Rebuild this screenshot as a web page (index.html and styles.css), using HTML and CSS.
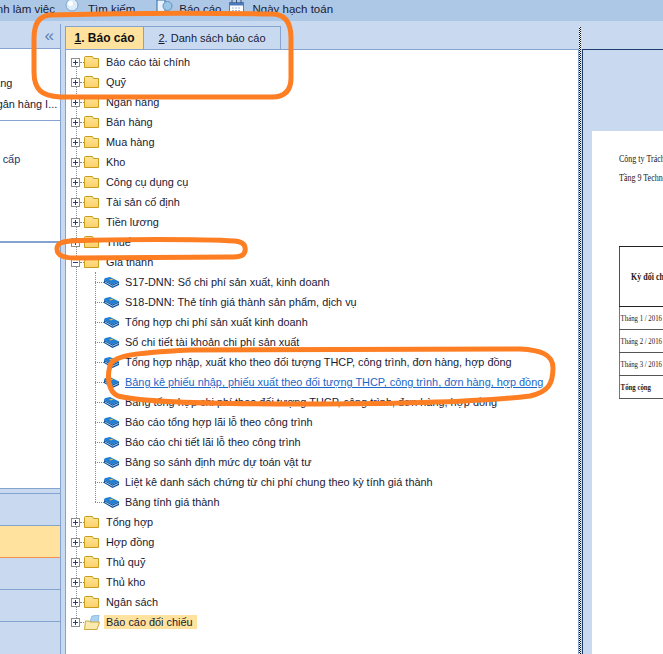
FILE: index.html
```html
<!DOCTYPE html>
<html lang="vi">
<head>
    <meta charset="UTF-8">
    <meta name="viewport" content="width=device-width, initial-scale=1.0">
    <title>Báo cáo</title>
    <link rel="stylesheet" href="styles.css">
</head>
<body>
    <!-- shared tree and toolbar icons -->
    <svg class="defs" width="0" height="0">
        <defs>
            <linearGradient id="folderFill" x1="0" y1="0" x2="0" y2="1">
                <stop offset="0" stop-color="#fee496"/>
                <stop offset="1" stop-color="#fcd06a"/>
            </linearGradient>
            <symbol id="plus" viewBox="0 0 9 9">
                <rect x="0.5" y="0.5" width="8" height="8" fill="#fff" stroke="#8e8e8e"/>
                <path d="M2 4.5h5M4.5 2v5" stroke="#2b3a7a"/>
            </symbol>
            <symbol id="minus" viewBox="0 0 9 9">
                <rect x="0.5" y="0.5" width="8" height="8" fill="#fff" stroke="#8e8e8e"/>
                <path d="M2 4.5h5" stroke="#2b3a7a"/>
            </symbol>
            <symbol id="folder" viewBox="0 0 15 12">
                <path d="M0.5 11.5V1.5Q0.5 0.5 1.5 0.5H8.500L9.500 2.500H14.500V11.500Z" fill="url(#folderFill)" stroke="#c79f1c"/>
            </symbol>
            <symbol id="folderOpen" viewBox="0 0 16 15">
                <path d="M5 9L8 1L15 0L14 9Z" fill="#a9d3f2" stroke="#7fa9cc" stroke-width="0.7"/>
                <path d="M0.500 14.500L1.500 6H5L6 7H15.500L13 14.500Z" fill="#fbe9b0" stroke="#c9a93c"/>
            </symbol>
            <symbol id="book" viewBox="0 0 15 11">
                <path d="M0 3Q0 1.500 1.500 1L6 0L15 4.500L8.500 7.500Z" fill="#1f7fd6"/>
                <path d="M0 3V6L8.500 11L15 8V4.500L8.500 7.500Z" fill="#0d5098"/>
                <path d="M1 5L8.500 9.200L14.500 6.400" stroke="#d5e9fb" fill="none" stroke-width="0.8"/>
                <path d="M5 2.500L8 1.700L9.500 2.600L6.500 3.500Z" fill="#e8b64c"/>
            </symbol>
        </defs>
    </svg>

    <header class="toolbar">
        <span class="tool tool-first">Màn hình làm việc</span>
        <svg class="tool-icon tool-icon-search" width="14" height="14" viewBox="0 0 14 14"><circle cx="7" cy="5" r="6" fill="#dcecf8" stroke="#7fa6c9"/><circle cx="5.5" cy="3.5" r="2.5" fill="#fff"/></svg>
        <span class="tool">Tìm kiếm</span>
        <svg class="tool-icon tool-icon-report" width="17" height="14" viewBox="0 0 17 14"><rect x="1" y="0" width="8" height="12" fill="#eaf3fb" stroke="#2f6ea8"/><circle cx="11.5" cy="6" r="4.5" fill="#9cc6e8" stroke="#5f93bf"/></svg>
        <span class="tool">Báo cáo</span>
        <svg class="tool-icon tool-icon-date" width="15" height="14" viewBox="0 0 15 14"><rect x="0.5" y="2.5" width="14" height="10" fill="#fff" stroke="#5a7fb5"/><rect x="0.5" y="2.5" width="14" height="3" fill="#4c78bd"/><path d="M3 0v3M7.500 0v3M12 0v3" stroke="#44526e"/><path d="M3 8h9M3 10.500h9" stroke="#9db6d8" stroke-dasharray="2 1"/></svg>
        <span class="tool">Ngày hạch toán</span>
    </header>

    <main class="workspace">
        <aside class="side">
            <div class="side-head"><span class="collapse">«</span></div>
            <div class="side-list">
                <div class="side-section side-section-one">
                    <p class="side-text side-bank">Ngân hàng</p>
                    <p class="side-text side-deposit">Tiền gửi ngân hàng I...</p>
                </div>
                <div class="side-section side-section-two">
                    <p class="side-text side-supplier">Nhà cung cấp</p>
                </div>
                <div class="side-section side-section-three"></div>
            </div>
            <div class="side-strip"></div>
            <div class="side-group"></div>
            <div class="side-group side-group-on"></div>
            <div class="side-group"></div>
            <div class="side-group"></div>
            <div class="side-group side-group-last"></div>
        </aside>

        <section class="reports">
            <div class="tabs">
                <div class="tab tab-on"><u>1</u>. Báo cáo</div>
                <div class="tab"><u>2</u>. Danh sách báo cáo</div>
            </div>
            <div class="tree-panel">
                <ul class="tree">
                    <li class="row"><svg class="exp"><use href="#plus"/></svg><i class="twig"></i><svg class="ico"><use href="#folder"/></svg><span class="label">Báo cáo tài chính</span></li>
                    <li class="row"><svg class="exp"><use href="#plus"/></svg><i class="twig"></i><svg class="ico"><use href="#folder"/></svg><span class="label">Quỹ</span></li>
                    <li class="row"><svg class="exp"><use href="#plus"/></svg><i class="twig"></i><svg class="ico"><use href="#folder"/></svg><span class="label">Ngân hàng</span></li>
                    <li class="row"><svg class="exp"><use href="#plus"/></svg><i class="twig"></i><svg class="ico"><use href="#folder"/></svg><span class="label">Bán hàng</span></li>
                    <li class="row"><svg class="exp"><use href="#plus"/></svg><i class="twig"></i><svg class="ico"><use href="#folder"/></svg><span class="label">Mua hàng</span></li>
                    <li class="row"><svg class="exp"><use href="#plus"/></svg><i class="twig"></i><svg class="ico"><use href="#folder"/></svg><span class="label">Kho</span></li>
                    <li class="row"><svg class="exp"><use href="#plus"/></svg><i class="twig"></i><svg class="ico"><use href="#folder"/></svg><span class="label">Công cụ dụng cụ</span></li>
                    <li class="row"><svg class="exp"><use href="#plus"/></svg><i class="twig"></i><svg class="ico"><use href="#folder"/></svg><span class="label">Tài sản cố định</span></li>
                    <li class="row"><svg class="exp"><use href="#plus"/></svg><i class="twig"></i><svg class="ico"><use href="#folder"/></svg><span class="label">Tiền lương</span></li>
                    <li class="row"><svg class="exp"><use href="#plus"/></svg><i class="twig"></i><svg class="ico"><use href="#folder"/></svg><span class="label">Thuế</span></li>
                    <li class="row"><svg class="exp"><use href="#minus"/></svg><i class="twig"></i><svg class="ico"><use href="#folder"/></svg><span class="label">Giá thành</span></li>
                    <li>
                        <ul class="sub">
                            <li class="row leaf"><i class="twig"></i><svg class="book"><use href="#book"/></svg><span class="label">S17-DNN: Sổ chi phí sản xuất, kinh doanh</span></li>
                            <li class="row leaf"><i class="twig"></i><svg class="book"><use href="#book"/></svg><span class="label">S18-DNN: Thẻ tính giá thành sản phẩm, dịch vụ</span></li>
                            <li class="row leaf"><i class="twig"></i><svg class="book"><use href="#book"/></svg><span class="label">Tổng hợp chi phí sản xuất kinh doanh</span></li>
                            <li class="row leaf"><i class="twig"></i><svg class="book"><use href="#book"/></svg><span class="label">Sổ chi tiết tài khoản chi phí sản xuất</span></li>
                            <li class="row leaf"><i class="twig"></i><svg class="book"><use href="#book"/></svg><span class="label">Tổng hợp nhập, xuất kho theo đối tượng THCP, công trình, đơn hàng, hợp đồng</span></li>
                            <li class="row leaf"><i class="twig"></i><svg class="book"><use href="#book"/></svg><span class="label label-link">Bảng kê phiếu nhập, phiếu xuất theo đối tượng THCP, công trình, đơn hàng, hợp đồng</span></li>
                            <li class="row leaf"><i class="twig"></i><svg class="book"><use href="#book"/></svg><span class="label">Bảng tổng hợp chi phí theo đối tượng THCP, công trình, đơn hàng, hợp đồng</span></li>
                            <li class="row leaf"><i class="twig"></i><svg class="book"><use href="#book"/></svg><span class="label">Báo cáo tổng hợp lãi lỗ theo công trình</span></li>
                            <li class="row leaf"><i class="twig"></i><svg class="book"><use href="#book"/></svg><span class="label">Báo cáo chi tiết lãi lỗ theo công trình</span></li>
                            <li class="row leaf"><i class="twig"></i><svg class="book"><use href="#book"/></svg><span class="label">Bảng so sánh định mức dự toán vật tư</span></li>
                            <li class="row leaf"><i class="twig"></i><svg class="book"><use href="#book"/></svg><span class="label">Liệt kê danh sách chứng từ chi phí chung theo kỳ tính giá thành</span></li>
                            <li class="row leaf"><i class="twig"></i><svg class="book"><use href="#book"/></svg><span class="label">Bảng tính giá thành</span></li>
                        </ul>
                    </li>
                    <li class="row"><svg class="exp"><use href="#plus"/></svg><i class="twig"></i><svg class="ico"><use href="#folder"/></svg><span class="label">Tổng hợp</span></li>
                    <li class="row"><svg class="exp"><use href="#plus"/></svg><i class="twig"></i><svg class="ico"><use href="#folder"/></svg><span class="label">Hợp đồng</span></li>
                    <li class="row"><svg class="exp"><use href="#plus"/></svg><i class="twig"></i><svg class="ico"><use href="#folder"/></svg><span class="label">Thủ quỹ</span></li>
                    <li class="row"><svg class="exp"><use href="#plus"/></svg><i class="twig"></i><svg class="ico"><use href="#folder"/></svg><span class="label">Thủ kho</span></li>
                    <li class="row"><svg class="exp"><use href="#plus"/></svg><i class="twig"></i><svg class="ico"><use href="#folder"/></svg><span class="label">Ngân sách</span></li>
                    <li class="row"><svg class="exp"><use href="#plus"/></svg><i class="twig"></i><svg class="ico ico-open"><use href="#folderOpen"/></svg><span class="label label-on">Báo cáo đối chiếu</span></li>
                </ul>
            </div>
        </section>

        <div class="splitter"></div>

        <section class="preview">
            <div class="sheet">
                <div class="sheet-body">
                    <p class="company">Công ty Trách nhiệm hữu hạn</p>
                    <p class="company">Tầng 9 Technosoft</p>
                    <table class="recon">
                        <tr class="recon-head"><th>Kỳ đối chiếu</th></tr>
                        <tr><td>Tháng 1 / 2016</td></tr>
                        <tr><td>Tháng 2 / 2016</td></tr>
                        <tr><td>Tháng 3 / 2016</td></tr>
                        <tr><td class="recon-total">Tổng cộng</td></tr>
                    </table>
                </div>
            </div>
        </section>
    </main>

    <!-- hand drawn marks on top of the screenshot -->
    <svg class="marks" width="663" height="654" viewBox="0 0 663 654">
        <path d="M50 15C120 13 220 13 272 14C286 14 291 24 291 38L291 78C291 90 285 97 272 97L60 97C42 96 34 90 34 72L34 38C34 25 38 16 50 15Z"/>
        <path d="M70 241C120 239 200 239 235 241C244 242 246 246 245 251C244 256 240 257 230 257L75 258C62 258 57 254 57 249C57 244 60 242 70 241Z"/>
        <path d="M110 366C112 356 130 353 190 350L520 349C540 350 553 354 553 368C553 384 548 392 530 396C480 402 400 404 300 404C220 404 140 402 118 396C108 392 107 376 110 366Z"/>
    </svg>
</body>
</html>
```

FILE: styles.css
```css
/* Reset */
* {
    margin: 0;
    padding: 0;
    box-sizing: border-box;
}

body {
    position: relative;
    width: 663px;
    height: 654px;
    overflow: hidden;
    background-color: #c9daf0;
    font-family: "Liberation Sans", Arial, sans-serif;
    font-size: 10.9px;
    color: #1a1a33;
}

.defs {
    position: absolute;
}

/* Top toolbar */
.toolbar {
    height: 21px;
    background-color: #adc8e6;
    display: flex;
    align-items: flex-start;
    overflow: hidden;
    white-space: nowrap;
}

.tool {
    font-size: 11.5px;
    line-height: 18px;
}

.tool-first {
    width: 55px;
    flex-shrink: 0;
    overflow: hidden;
    direction: rtl;
}

.tool-icon {
    flex-shrink: 0;
}

.tool-icon-search {
    margin: 0 9px 0 10px;
}

.tool-icon-report {
    margin: 0 6px 0 21px;
}

.tool-icon-date {
    margin: 0 8px;
}

/* Left panel, mostly cut off by the crop */
.workspace {
    display: flex;
    height: 633px;
}

.side {
    width: 61px;
    flex-shrink: 0;
    margin-top: 3px;
    border-right: 1px solid #84a3d0;
    display: flex;
    flex-direction: column;
}

.side-head {
    height: 25px;
    border-bottom: 1px solid #84a3d0;
    text-align: right;
    padding-right: 6px;
}

.collapse {
    font-size: 17px;
    line-height: 24px;
    color: #5b7fb5;
}

.side-list {
    height: 440px;
    background-color: #fff;
}

.side-section {
    border-bottom: 1px solid #84a3d0;
    overflow: hidden;
}

.side-section-one {
    height: 72px;
    padding-top: 24px;
}

.side-section-two {
    height: 121px;
    padding-top: 28px;
}

.side-text {
    line-height: 21px;
    white-space: nowrap;
}

.side-bank {
    margin-left: -41px;
}

.side-deposit {
    margin-left: -52px;
}

.side-supplier {
    margin-left: -47px;
    color: #16386e;
}

.side-strip {
    height: 6px;
    border-top: 1px solid #84a3d0;
    border-bottom: 1px solid #84a3d0;
}

.side-group {
    height: 32px;
    border-bottom: 1px solid #84a3d0;
}

.side-group-on {
    background-color: #fee29d;
    border-bottom-color: #f0904a;
}

.side-group-last {
    border-bottom: none;
}

/* Report tree */
.reports {
    width: 514px;
    flex-shrink: 0;
    margin-left: 4px;
    padding-top: 5px;
    display: flex;
    flex-direction: column;
}

.tabs {
    display: flex;
    height: 23px;
    border-left: 1px solid #84a3d0;
}

.tab {
    padding-top: 4px;
    width: 137px;
    text-align: center;
    font-size: 11px;
    line-height: 14px;
    border-top: 1px solid #84a3d0;
    border-right: 1px solid #84a3d0;
}

.tab-on {
    width: 78px;
    background-color: #fee29d;
    font-size: 12px;
    font-weight: bold;
    color: #111;
}

.tree-panel {
    flex-grow: 1;
    background-color: #fff;
    border: 1px solid #84a3d0;
    border-bottom: none;
    padding-top: 2px;
}

.tree,
.sub {
    list-style-type: none;
    position: relative;
}

.tree::before,
.sub::before {
    content: "";
    position: absolute;
    border-left: 1px dotted #8a8a8a;
}

.tree::before {
    left: 10px;
    top: 10px;
    height: 560px;
}

.sub::before {
    left: 29px;
    top: 0;
    bottom: 10px;
}

.row {
    height: 20px;
    display: flex;
    align-items: center;
    padding-left: 5px;
    white-space: nowrap;
}

.leaf {
    padding-left: 29px;
}

.exp {
    position: relative;
    width: 9px;
    height: 9px;
    flex-shrink: 0;
}

.twig {
    width: 4px;
    border-top: 1px dotted #8a8a8a;
    flex-shrink: 0;
}

.leaf .twig {
    width: 9px;
}

.ico {
    width: 15px;
    height: 12px;
    flex-shrink: 0;
    margin-right: 7px;
}

.ico-open {
    width: 16px;
    height: 15px;
    margin-right: 6px;
}

.book {
    width: 15px;
    height: 11px;
    flex-shrink: 0;
    margin-right: 6px;
}

.label-link {
    color: #1a66c9;
    text-decoration: underline;
}

.label-on {
    background-color: #fee29d;
    padding: 1px 4px 1px 2px;
    margin-left: -2px;
}

/* Dotted drag bar */
.splitter {
    width: 2px;
    flex-shrink: 0;
    margin: 6px 1px 0 0;
    background: repeating-conic-gradient(#111 0 25%, #fff 0 50%) 0 0 / 2px 2px;
}

/* Report preview on the right */
.preview {
    flex-grow: 1;
    margin-top: 28px;
    border-top: 1px solid #1f3f72;
    border-left: 1px solid #1f3f72;
    padding: 81px 0 0 9px;
    overflow: hidden;
}

.sheet {
    height: 100%;
    background-color: #fff;
    padding: 18px 0 0 27px;
    overflow: hidden;
}

/* the report is shown squeezed sideways, like a zoomed out page */
.sheet-body {
    width: 200px;
    transform: scaleX(0.8);
    transform-origin: 0 0;
    font-family: "Liberation Serif", "Times New Roman", serif;
    font-size: 10px;
    color: #222;
    white-space: nowrap;
}

.company {
    line-height: 19px;
}

.recon {
    width: 150px;
    margin-top: 59px;
    border-collapse: collapse;
    table-layout: fixed;
}

.recon td,
.recon th {
    border: 1px solid #555;
    border-right: none;
    height: 23px;
    padding-left: 1px;
    font-size: 8.5px;
    text-align: left;
}

.recon-head th {
    height: 60px;
    border-color: #222;
    padding-left: 14px;
    font-size: 10px;
}

.recon-total {
    font-weight: bold;
}

/* Orange annotation marks */
.marks {
    position: absolute;
    left: 0;
    top: 0;
    pointer-events: none;
}

.marks path {
    fill: none;
    stroke: #fd7e23;
    stroke-width: 5;
}
```
